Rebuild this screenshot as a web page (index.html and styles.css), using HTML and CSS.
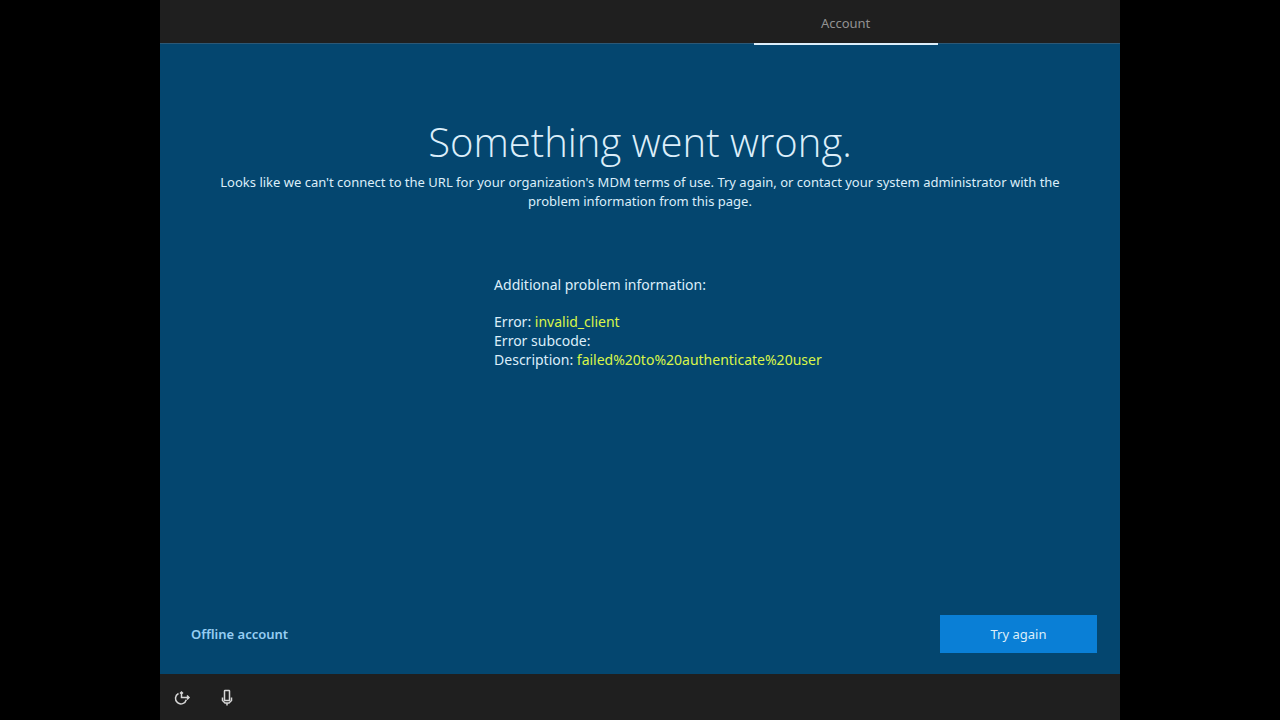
FILE: index.html
```html
<!DOCTYPE html>
<html lang="en">
<head>
    <meta charset="UTF-8">
    <meta name="viewport" content="width=device-width, initial-scale=1.0">
    <title>Something went wrong</title>
    <link rel="stylesheet" href="styles.css">
</head>
<body>

    <div class="setup-screen">
        <header class="top-bar">
            <nav class="steps">
                <a href="#" class="step active">Account</a>
            </nav>
        </header>

        <main>
            <h1>Something went wrong.</h1>
            <p class="message">Looks like we can't connect to the URL for your organization's MDM terms of use. Try again, or contact your system administrator with the problem information from this page.</p>

            <section class="problem-info">
                <h2>Additional problem information:</h2>
                <p>Error: <span class="value">invalid_client</span></p>
                <p>Error subcode:</p>
                <p>Description: <span class="value">failed%20to%20authenticate%20user</span></p>
            </section>

            <div class="actions">
                <a href="#" class="offline-link">Offline account</a>
                <button type="button" class="try-again-btn">Try again</button>
            </div>
        </main>

        <footer class="bottom-bar">
            <button type="button" class="icon-btn" aria-label="Ease of access">
                <svg width="18" height="18" viewBox="0 0 18 18">
                    <path d="M8.5 3V8.5H16M14 6.5l2 2-2 2M7 4.5l1.500-1.500 1.500 1.500" />
                    <path d="M5.500 4.500A5.500 5.500 0 1 0 13.300 10.800" />
                </svg>
            </button>
            <button type="button" class="icon-btn" aria-label="Microphone">
                <svg width="18" height="18" viewBox="0 0 18 18">
                    <rect x="6.5" y="1.5" width="5" height="10" rx="0.5" />
                    <path d="M4.500 8.500v3l2.500 2.500h4l2.500-2.500v-3M9 14v2.500" />
                </svg>
            </button>
        </footer>
    </div>

</body>
</html>
```
FILE: styles.css
```css
:root {
    --bar-color: #1f1f1f;
    --page-color: #04466f;
    --accent-color: #0a7fd6;
    --link-color: #96cdf2;
    --value-color: #d9f549;
    --text-color: #dceefa;
}

* { box-sizing: border-box; }

body {
    margin: 0;
    background-color: #000;
    color: var(--text-color);
    font-family: "Segoe UI", "Noto Sans", "Open Sans", sans-serif;
    font-size: 13px;
    line-height: 19px;
}

.setup-screen {
    width: 75%;
    min-height: 100vh;
    margin: 0 auto;
    display: flex;
    flex-direction: column;
    background-color: var(--page-color);
}

/* Top bar */
.top-bar {
    height: 44px;
    flex-shrink: 0;
    background-color: var(--bar-color);
    border-bottom: 1px solid #2c5876;
}
.steps {
    display: flex;
    justify-content: flex-end;
    margin-right: 19%;
}
.step {
    width: 184px;
    height: 45px;
    line-height: 46px;
    text-align: center;
    color: #929292;
    text-decoration: none;
}
.step.active { border-bottom: 2px solid #dceefa; }

/* Error message */
main {
    flex-grow: 1;
    display: flex;
    flex-direction: column;
    padding: 70px 0 21px;
}
h1 {
    margin: 0 0 3px;
    font-family: "Segoe UI", "Open Sans", sans-serif;
    font-size: 40px;
    font-weight: 300;
    line-height: 56px;
    text-align: center;
}
.message {
    max-width: 870px;
    margin: 0 auto;
    text-align: center;
}
.problem-info {
    margin: 64px 0 0 34.8%;
    font-size: 14px;
}
.problem-info h2 {
    margin: 0 0 18px;
    font-size: 14px;
    font-weight: 400;
    line-height: 19px;
}
.problem-info p { margin: 0; }
.problem-info .value { color: var(--value-color); }

/* Actions */
.actions {
    display: flex;
    justify-content: space-between;
    align-items: center;
    margin-top: auto;
    padding: 0 23px 0 31px;
}
.offline-link {
    color: var(--link-color);
    font-weight: 600;
    text-decoration: none;
}
.try-again-btn {
    width: 157px;
    height: 38px;
    border: none;
    background-color: var(--accent-color);
    color: var(--text-color);
    font: inherit;
    cursor: pointer;
}

/* Bottom bar */
.bottom-bar {
    display: flex;
    align-items: center;
    gap: 27px;
    height: 46px;
    padding: 2px 13px 0;
    flex-shrink: 0;
    background-color: var(--bar-color);
}
.icon-btn {
    display: flex;
    padding: 0;
    border: none;
    background: none;
    cursor: pointer;
}
.icon-btn svg {
    fill: none;
    stroke: #d6d6d6;
    stroke-width: 1.5;
}
```
